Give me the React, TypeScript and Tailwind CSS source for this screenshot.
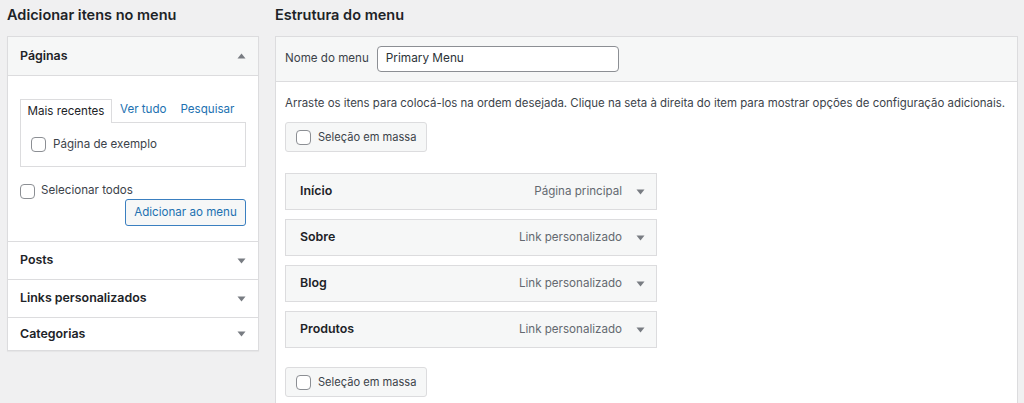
import React from 'react';

function Tri({ up = false }: { up?: boolean }) {
  return (
    <svg width="9" height="6" viewBox="0 0 9 6" className="text-[#787c82]">
      {up ? <path d="M4.5 0.5 L8.5 5.5 L0.5 5.5 Z" fill="currentColor" /> : <path d="M0.5 0.5 L8.5 0.5 L4.5 5.5 Z" fill="currentColor" />}
    </svg>
  );
}

function Box() {
  return <span className="inline-block w-[15px] h-[15px] rounded-[4px] border border-[#8c8f94] bg-white shrink-0" />;
}

function BulkButton() {
  return (
    <div className="inline-flex items-center gap-[7px] h-[30px] pl-[10px] pr-[10px] bg-[#f6f7f7] border border-[#dcdcde] rounded-[3px] text-[11.1px] text-[#3c434a]">
      <Box />
      <span>Seleção em massa</span>
    </div>
  );
}

const items = [
  { title: 'Início', kind: 'Página principal' },
  { title: 'Sobre', kind: 'Link personalizado' },
  { title: 'Blog', kind: 'Link personalizado' },
  { title: 'Produtos', kind: 'Link personalizado' },
];

export default function App() {
  return (
    <div className="w-[1024px] h-[403px] overflow-hidden bg-[#f0f0f1] text-[#1d2327] flex gap-[16px] pl-[7px]" style={{ fontFamily: 'Inter, "Noto Sans", sans-serif' }}>
      {/* Left column */}
      <div className="w-[252px] shrink-0">
        <h2 className="h-[29px] pt-[4px] text-[14.5px] font-semibold">Adicionar itens no menu</h2>
        <div className="mt-[7px] bg-white border border-[#dcdcde] shadow-[0_1px_1px_rgba(0,0,0,0.04)]">
          <div className="h-[39px] flex items-center justify-between pl-[12px] pr-[12px] bg-[#f6f7f7] border-b border-[#dcdcde]">
            <span className="text-[12.4px] font-semibold">Páginas</span>
            <Tri up />
          </div>
          <div className="px-[12px] pt-[22px] pb-[15px]">
            <div className="flex items-end text-[11.6px] whitespace-nowrap">
              <div className="h-[24px] w-[92px] justify-center flex items-center border border-b-0 border-[#dcdcde] bg-white text-[#1d2327] relative top-[1px]">Mais recentes</div>
              <span className="ml-[8px] h-[24px] flex items-center text-[#2271b1]">Ver tudo</span>
              <span className="ml-[14px] h-[24px] flex items-center text-[#2271b1]">Pesquisar</span>
            </div>
            <div className="h-[45px] border border-[#dcdcde] flex items-center pl-[10px] gap-[7px] text-[11.6px] text-[#3c434a]">
              <Box />
              <span>Página de exemplo</span>
            </div>
            <div className="mt-[16px] flex items-center gap-[6px] text-[11.6px] text-[#3c434a] h-[16px]">
              <Box />
              <span>Selecionar todos</span>
            </div>
            <div className="flex justify-end">
              <div className="h-[27px] w-[121px] justify-center flex items-center border border-[#3a7fc0] rounded-[3px] bg-[#f6f7f7] text-[#2271b1] text-[11.6px]">Adicionar ao menu</div>
            </div>
          </div>
          {['Posts', 'Links personalizados', 'Categorias'].map((t, i) => (
            <div key={t} className={`flex items-center justify-between px-[12px] border-t border-[#dcdcde] ${i === 2 ? 'h-[33px]' : 'h-[38px]'}`}>
              <span className="text-[12.4px] font-semibold">{t}</span>
              <Tri />
            </div>
          ))}
        </div>
      </div>

      {/* Right column */}
      <div className="w-[743px] shrink-0">
        <h2 className="h-[29px] pt-[4px] text-[14.5px] font-semibold">Estrutura do menu</h2>
        <div className="mt-[7px] bg-white border border-[#dcdcde] h-[400px]">
          <div className="h-[45px] bg-[#f6f7f7] border-b border-[#dcdcde] flex items-center pl-[9px] gap-[8px]">
            <span className="text-[11.6px] text-[#3c434a]">Nome do menu</span>
            <div className="w-[242px] h-[26px] border border-[#8c8f94] rounded-[4px] bg-white flex items-center px-[8px] text-[11.8px] text-[#2c3338]">Primary Menu</div>
          </div>
          <div className="pl-[9px] pt-[12px]">
            <p className="text-[11.45px] text-[#3c434a] leading-[18px] whitespace-nowrap">Arraste os itens para colocá-los na ordem desejada. Clique na seta à direita do item para mostrar opções de configuração adicionais.</p>
            <div className="mt-[10px]">
              <BulkButton />
            </div>
            <div className="mt-[21px] w-[372px] flex flex-col gap-[9px]">
              {items.map((it) => (
                <div key={it.title} className="h-[37px] bg-[#f6f7f7] border border-[#dcdcde] flex items-center pl-[14px] pr-[11px]">
                  <span className="text-[12.4px] font-semibold flex-1">{it.title}</span>
                  <span className="text-[11.6px] text-[#646970]">{it.kind}</span>
                  <span className="ml-[14px]"><Tri /></span>
                </div>
              ))}
            </div>
            <div className="mt-[19px]">
              <BulkButton />
            </div>
          </div>
        </div>
      </div>
    </div>
  );
}
